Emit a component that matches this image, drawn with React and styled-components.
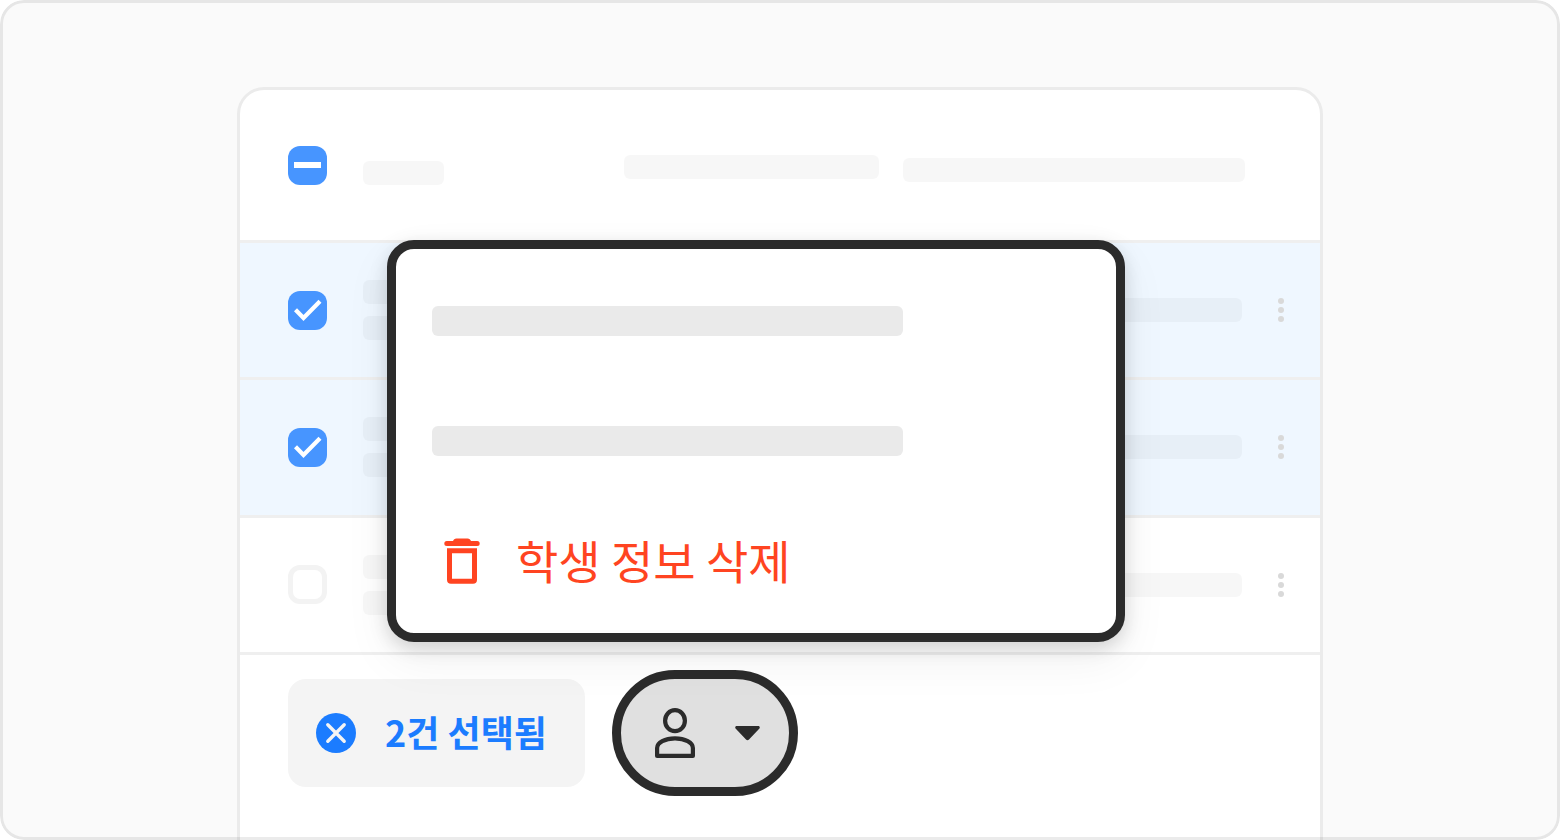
import { useState } from 'react'
import styled, { createGlobalStyle } from 'styled-components'

const colors = {
  page: '#fafafa',
  line: '#ebebeb',
  rowLine: '#efefef',
  dark: '#2b2b2b',
  blue: '#1b7cff',
  checkbox: '#4795ff',
  selected: '#eff7ff',
  danger: '#ff4421',
}

const students = [1, 2, 3]

export default function App() {
  const [selected, setSelected] = useState([1, 2])

  const toggle = (id) =>
    setSelected(selected.includes(id) ? selected.filter((s) => s !== id) : [...selected, id])

  return (
    <>
      <GlobalStyle />
      <Frame>
        <Card>
          <Table>
            <thead>
              <HeadRow>
                <CheckCell as="th">
                  <Checkbox label="전체 선택" checked={selected.length > 0} partial onChange={() => setSelected([])} />
                </CheckCell>
                <NameCell as="th" $shift={15}><Bar $width={81} /></NameCell>
                <InfoCell as="th" $shift={4}><Bar $width={255} /></InfoCell>
                <Cell as="th" $shift={10}><Bar $width={342} /></Cell>
                <MoreCell as="th" />
              </HeadRow>
            </thead>
            <tbody>
              {students.map((id) => (
                <Row key={id} $selected={selected.includes(id)}>
                  <CheckCell>
                    <Checkbox label={`학생 ${id}`} checked={selected.includes(id)} onChange={() => toggle(id)} />
                  </CheckCell>
                  <NameCell>
                    <BarStack>
                      <Bar $width={120} />
                      <Bar $width={81} />
                    </BarStack>
                  </NameCell>
                  <InfoCell><Bar $width={255} /></InfoCell>
                  <Cell><Bar $width={339} /></Cell>
                  <MoreCell>
                    <MoreButton aria-label="더보기"><i /><i /><i /></MoreButton>
                  </MoreCell>
                </Row>
              ))}
            </tbody>
          </Table>

          <ActionBar>
            <SelectedChip onClick={() => setSelected([])}>
              <CloseIcon />
              <Label>{selected.length}건 선택됨</Label>
            </SelectedChip>
            <MenuTrigger aria-label="학생 메뉴" aria-haspopup="menu" aria-expanded="true">
              <PersonIcon />
              <CaretIcon />
            </MenuTrigger>
          </ActionBar>

          <Menu role="menu">
            <MenuItem role="menuitem" aria-label="메뉴 1"><MenuBar /></MenuItem>
            <MenuItem role="menuitem" aria-label="메뉴 2"><MenuBar /></MenuItem>
            <MenuItem role="menuitem" $danger>
              <TrashIcon />
              <Label>학생 정보 삭제</Label>
            </MenuItem>
          </Menu>
        </Card>
      </Frame>
    </>
  )
}

function Checkbox({ label, checked, partial, onChange }) {
  return (
    <CheckboxStyled>
      <input type="checkbox" aria-label={label} checked={checked} onChange={onChange} />
      {checked && (
        <svg width="39" height="39" viewBox="0 0 39 39" fill="none" stroke="#fff">
          {partial ? <path d="M6 19H33" strokeWidth="6" /> : <path d="M7.5 18.7L15.5 27L32 10.2" strokeWidth="4.2" />}
        </svg>
      )}
    </CheckboxStyled>
  )
}

const CloseIcon = () => (
  <svg width="40" height="40" viewBox="0 0 40 40" fill="none">
    <circle cx="20" cy="20" r="20" fill={colors.blue} />
    <path d="M11.8 11.8L28.2 28.2M28.2 11.8L11.8 28.2" stroke="#f4f4f4" strokeWidth="3.4" strokeLinecap="round" />
  </svg>
)

const PersonIcon = () => (
  <svg width="40" height="50" viewBox="0 0 40 50" fill="none" stroke={colors.dark} strokeWidth="4.2">
    <ellipse cx="20" cy="12.7" rx="9.9" ry="10.5" />
    <path d="M2.1 47.9V40C2.1 34.5 10 30.3 20 30.3S37.9 34.5 37.9 40V47.9Z" strokeLinejoin="round" />
  </svg>
)

const CaretIcon = () => (
  <svg width="25" height="15" viewBox="0 0 25 15" fill={colors.dark}>
    <path d="M1.7 0H23.3C24.8 0 25.3 1.7 24.2 2.8L14 13.4C13.1 14.4 11.9 14.4 11 13.4L0.8 2.8C-0.3 1.7 0.2 0 1.7 0Z" />
  </svg>
)

const TrashIcon = () => (
  <svg width="36" height="46" viewBox="0 0 36 46" fill={colors.danger}>
    <path d="M12.5 0.4H23.5C25.5 0.4 26.3 1.5 27 3.1H33.2A2.5 2.5 0 0 1 33.2 8.1H2.8A2.5 2.5 0 0 1 2.8 3.1H9C9.7 1.5 10.5 0.4 12.5 0.4Z" />
    <path fillRule="evenodd" d="M3 10.3H33V41.7A4 4 0 0 1 29 45.7H7A4 4 0 0 1 3 41.7ZM8 15.3V40.7H28V15.3Z" />
  </svg>
)

const GlobalStyle = createGlobalStyle`
  * {
    box-sizing: border-box;
  }

  body {
    margin: 0;
    background: #fff;
    font-family: "Noto Sans CJK KR", sans-serif;
  }

  button {
    border: 0;
    padding: 0;
    background: none;
    font: inherit;
    cursor: pointer;
  }

  svg {
    display: block;
    flex: none;
  }
`

const Frame = styled.main`
  position: relative;
  display: flex;
  height: 100vh;
  min-height: 840px;
  padding: 87px 237px 0;
  overflow: hidden;
  border-radius: 24px;
  background: ${colors.page};

  /* outline stays above the card, which runs off the bottom edge */
  &::after {
    content: "";
    position: absolute;
    inset: 0;
    border: 3px solid rgba(0, 0, 0, 0.08);
    border-radius: 24px;
    pointer-events: none;
  }
`

const Card = styled.section`
  position: relative;
  flex: 1;
  border: 3px solid ${colors.line};
  border-bottom: 0;
  border-radius: 27px 27px 0 0;
  background: #fff;
`

const Table = styled.table`
  width: 100%;
  height: 565px;
  table-layout: fixed;
  border-collapse: separate;
  border-spacing: 0;
`

const HeadRow = styled.tr`
  height: 153px;
`

const Row = styled.tr`
  background: ${({ $selected }) => ($selected ? colors.selected : 'transparent')};
`

const Cell = styled.td`
  padding: ${({ $shift = 0 }) => $shift}px 0 0;
  border-bottom: 3px solid ${colors.rowLine};
  vertical-align: middle;
`

const CheckCell = styled(Cell)`
  width: 123px;
  padding-left: 48px;
`

const NameCell = styled(Cell)`
  width: 261px;
`

const InfoCell = styled(Cell)`
  width: 279px;
`

const MoreCell = styled(Cell)`
  width: 54px;
`

const BarStack = styled.div`
  display: grid;
  gap: 12px;
`

const Bar = styled.div`
  width: ${({ $width }) => $width}px;
  height: 24px;
  border-radius: 6px;
  background: rgba(0, 0, 0, 0.03);
`

const CheckboxStyled = styled.label`
  display: grid;
  width: 39px;
  height: 39px;

  input,
  svg {
    grid-area: 1 / 1;
  }

  input {
    appearance: none;
    width: 39px;
    height: 39px;
    margin: 0;
    border: 5px solid #f3f3f3;
    border-radius: 12px;
    background: #fff;
  }

  input:checked {
    border: 0;
    background: ${colors.checkbox};
  }

  svg {
    pointer-events: none;
  }
`

const MoreButton = styled.button`
  display: grid;
  gap: 3px;
  padding: 0 12px;

  i {
    width: 6px;
    height: 6px;
    border-radius: 50%;
    background: #d9d9d9;
  }
`

const ActionBar = styled.div`
  display: flex;
  align-items: center;
  gap: 27px;
  padding: 15px 48px;
`

/* the Korean font sits low in its line box */
const Label = styled.span`
  padding-bottom: 5px;
`

const SelectedChip = styled.button`
  display: flex;
  align-items: center;
  gap: 29px;
  height: 108px;
  padding: 0 38px 0 28px;
  border-radius: 18px;
  background: #f4f4f4;
  color: ${colors.blue};
  font-size: 36px;
  font-weight: 700;
  white-space: nowrap;
`

const MenuTrigger = styled.button`
  && {
    display: flex;
    align-items: center;
    gap: 40px;
    height: 126px;
    padding: 0 29px 0 34px;
    border: 9px solid ${colors.dark};
    border-radius: 63px;
    background: #e0e0e0;
  }
`

const Menu = styled.div`
  position: absolute;
  top: 150px;
  left: 147px;
  right: 195px;
  display: grid;
  padding: 12px 0;
  border: 9px solid ${colors.dark};
  border-radius: 27px;
  background: #fff;
  box-shadow: 0 6px 18px rgba(0, 0, 0, 0.15), 0 18px 48px rgba(0, 0, 0, 0.06);
`

const MenuItem = styled.button`
  display: flex;
  align-items: center;
  gap: 36px;
  height: 120px;
  padding: 0 ${({ $danger }) => ($danger ? 48 : 36)}px;
  color: ${({ $danger }) => ($danger ? colors.danger : colors.dark)};
  font-size: 46px;
  white-space: nowrap;
`

const MenuBar = styled.span`
  width: 471px;
  height: 30px;
  border-radius: 6px;
  background: #eaeaea;
`
